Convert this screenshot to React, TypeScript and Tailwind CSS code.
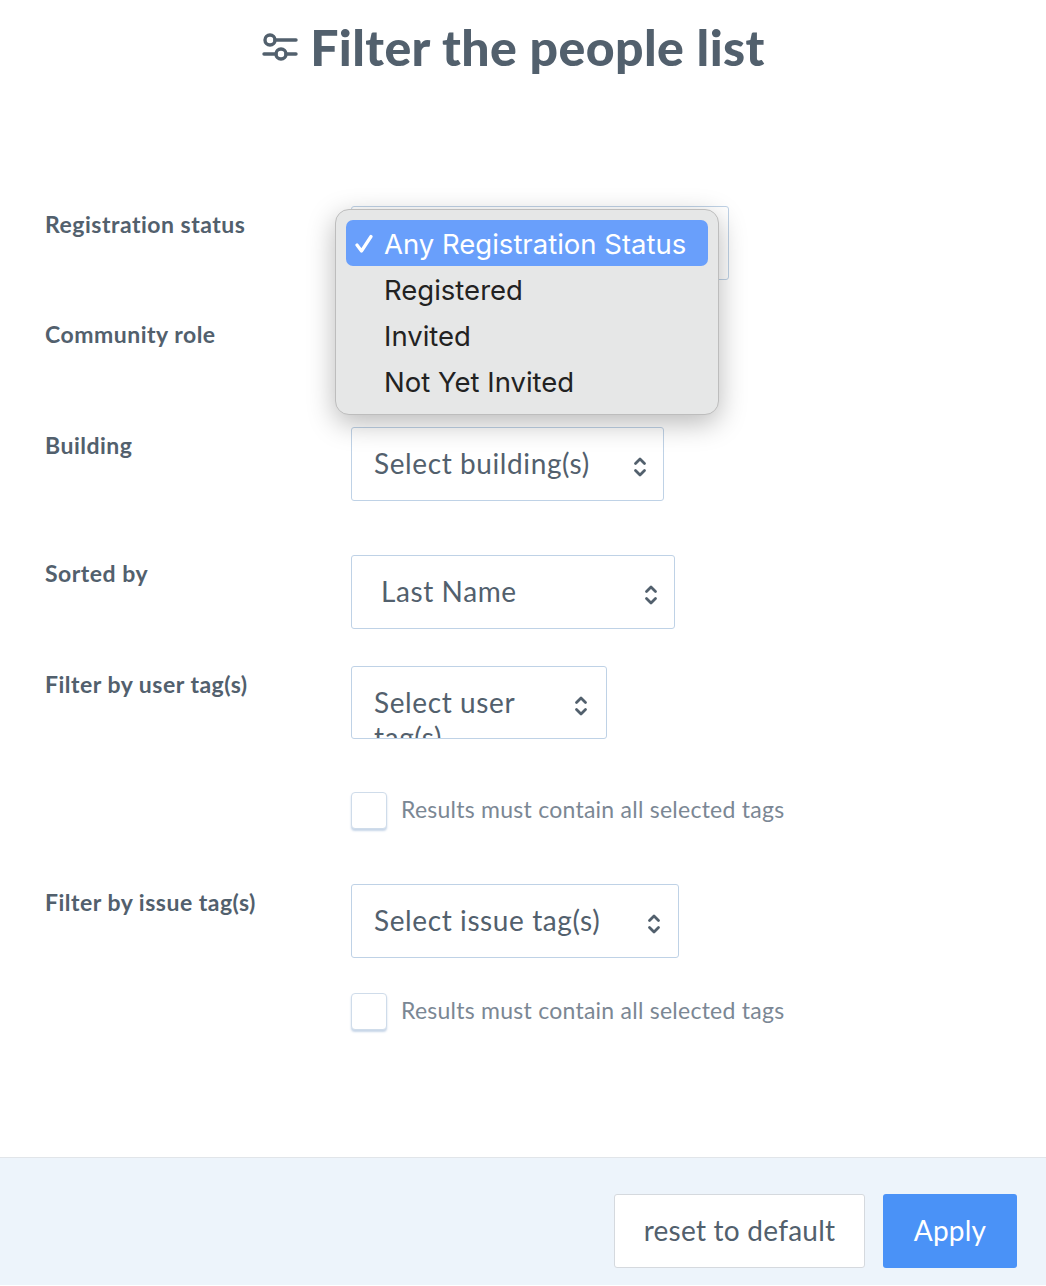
import React from "react";

const labelClass =
  "w-[351px] shrink-0 pl-[45px] pt-[4px] text-[23px] leading-[28px] font-bold tracking-[0.5px] text-[#52606d]";

const SelectArrows = () => (
  <svg
    className="shrink-0 w-[14px] h-[22px] text-[#52606d]"
    viewBox="0 0 14 22"
    fill="none"
    stroke="currentColor"
    strokeWidth={2.8}
    strokeLinecap="round"
    strokeLinejoin="round"
  >
    <path d="M2.5 7.5L7 3l4.5 4.5" />
    <path d="M2.5 14.5L7 19l4.5-4.5" />
  </svg>
);

interface FakeSelectProps {
  text: string;
  className: string;
}

// Closed select, width and padding differ per row
const FakeSelect = ({ text, className }: FakeSelectProps) => (
  <div
    className={`flex justify-between border border-[#bfd2e6] rounded-[3px] bg-white text-[28px] leading-[35px] tracking-[0.6px] text-[#52606d] overflow-hidden ${className}`}
  >
    <span className="pt-[18px]">{text}</span>
    <div className="pt-[28px]">
      <SelectArrows />
    </div>
  </div>
);

const CheckRow = ({ className }: { className: string }) => (
  <div className={`flex items-center pl-[351px] ${className}`}>
    <div className="w-[36px] h-[37px] bg-white border border-[#cfdcea] rounded-[4px] shadow-[0_2px_2px_rgba(130,165,205,0.45)]" />
    <span className="ml-[14px] -mt-[2px] text-[23px] tracking-[0.25px] text-[#7b8794]">
      Results must contain all selected tags
    </span>
  </div>
);

const App: React.FC = () => {
  const options = ["Registered", "Invited", "Not Yet Invited"];

  return (
    <div
      className="relative flex flex-col h-[1286px] bg-white overflow-hidden"
      style={{ fontFamily: "Lato, 'Open Sans', sans-serif" }}
    >
      {/* Header */}
      <div className="flex items-center justify-center h-[94px] pr-[19px] text-[#52606d]">
        <svg
          className="w-[36px] h-[30px] mr-[12px]"
          viewBox="0 0 36 30"
          fill="none"
          stroke="currentColor"
          strokeWidth={3.4}
          strokeLinecap="round"
        >
          <circle cx="8" cy="8" r="5" />
          <path d="M13 8h21" />
          <circle cx="19" cy="22" r="5" />
          <path d="M2 22h12M24 22h10" />
        </svg>
        <h1 className="text-[50px] leading-[60px] font-black tracking-[0.4px]">
          Filter the people list
        </h1>
      </div>

      {/* Form rows */}
      <div className="flex mt-[112px]">
        <div className={labelClass}>Registration status</div>
        <FakeSelect text="Any Registration Status" className="w-[378px] h-[74px] pl-[22px] pr-[24px]" />
      </div>
      <div className="flex mt-[36px]">
        <div className={labelClass}>Community role</div>
        <div className="h-[74px]" />
      </div>
      <div className="flex mt-[37px]">
        <div className={labelClass}>Building</div>
        <FakeSelect text="Select building(s)" className="w-[313px] h-[74px] pl-[22px] pr-[16px]" />
      </div>
      <div className="flex mt-[54px]">
        <div className={labelClass}>Sorted by</div>
        <FakeSelect text="Last Name" className="w-[324px] h-[74px] pl-[29px] pr-[16px]" />
      </div>
      <div className="flex mt-[37px]">
        <div className={labelClass}>Filter by user tag(s)</div>
        <FakeSelect text="Select user tag(s)" className="w-[256px] h-[73px] pl-[22px] pr-[18px] [&>span]:w-[170px]" />
      </div>
      <CheckRow className="mt-[53px]" />
      <div className="flex mt-[55px]">
        <div className={labelClass}>Filter by issue tag(s)</div>
        <FakeSelect text="Select issue tag(s)" className="w-[328px] h-[74px] pl-[22px] pr-[17px]" />
      </div>
      <CheckRow className="mt-[35px]" />

      {/* Footer */}
      <div className="mt-auto mb-[1px] h-[128px] flex justify-end gap-[18px] pt-[36px] pr-[29px] bg-[#edf4fb] border-t border-[#e1e5e9]">
        <button className="w-[251px] h-[74px] pb-[2px] bg-white border border-[#d5d9de] rounded-[3px] text-[28px] tracking-[0.25px] text-[#52606d]">
          reset to default
        </button>
        <button className="w-[134px] h-[74px] pb-[2px] bg-[#4a92f7] rounded-[3px] text-[28px] tracking-[0.2px] text-white">
          Apply
        </button>
      </div>

      {/* Native select menu, open over the first rows */}
      <div
        className="absolute left-[335px] top-[209px] w-[384px] h-[206px] p-[10px] bg-[#e6e7e7] border border-[#bdbdbd] rounded-[14px] shadow-[0_8px_28px_rgba(0,0,0,0.28)] text-[27.5px] leading-[49px] text-[#222]"
        style={{ fontFamily: "Inter, sans-serif" }}
      >
        <div className="relative h-[46px] pl-[38px] bg-[#699ffb] rounded-[7px] text-white">
          <svg
            className="absolute left-[9px] top-[14px] w-[18px] h-[19px]"
            viewBox="0 0 18 19"
            fill="none"
            stroke="currentColor"
            strokeWidth={3.2}
            strokeLinecap="round"
            strokeLinejoin="round"
          >
            <path d="M2 11l4.5 6L16 2.5" />
          </svg>
          Any Registration Status
        </div>
        {options.map((option) => (
          <div key={option} className="h-[46px] pl-[38px]">
            {option}
          </div>
        ))}
      </div>
    </div>
  );
};

export default App;
